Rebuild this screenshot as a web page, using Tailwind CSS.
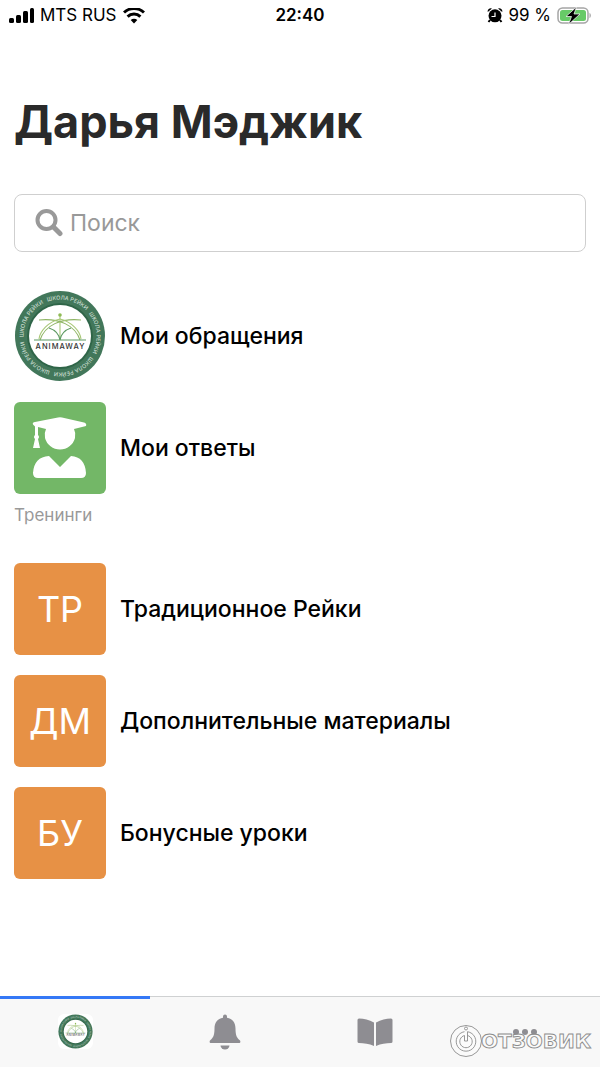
<!doctype html>

<html lang="ru">
  <head>
    <meta charset="UTF-8" />
    <meta name="viewport" content="width=device-width, initial-scale=1.0" />
    <title>Дарья Мэджик</title>
    <script src="https://cdn.jsdelivr.net/npm/@tailwindcss/browser@4"></script>
  </head>
  <body class="relative flex flex-col min-h-screen bg-white text-black font-['Inter','Liberation_Sans',sans-serif]">
    <!-- logo, used in the list and in the tab bar -->
    <svg class="hidden">
      <symbol id="logo" viewBox="0 0 92 92">
        <defs>
          <path id="ring" d="M46 9.500a36.500 36.500 0 1 1 0 73a36.500 36.500 0 1 1 0-73" />
        </defs>
        <circle cx="46" cy="46" r="45" fill="#42775a" />
        <circle cx="46" cy="46" r="33" fill="#2f6548" />
        <circle cx="46" cy="46" r="31" fill="#fff" />
        <g fill="#c9dccf" font-size="5.500">
          <text transform="rotate(-20 46 46)"><textPath href="#ring">ШКОЛА РЕЙКИ</textPath></text>
          <text transform="rotate(52 46 46)"><textPath href="#ring">ШКОЛА РЕЙКИ</textPath></text>
          <text transform="rotate(124 46 46)"><textPath href="#ring">ШКОЛА РЕЙКИ</textPath></text>
          <text transform="rotate(196 46 46)"><textPath href="#ring">ШКОЛА РЕЙКИ</textPath></text>
          <text transform="rotate(268 46 46)"><textPath href="#ring">ШКОЛА РЕЙКИ</textPath></text>
        </g>
        <g fill="none" stroke="#8fb565" stroke-width="1.100">
          <path d="M46 26v24" stroke="#a9c878" />
          <path d="M25 30c20-2 36 5 41 20M67 30c-20-2-36 5-41 20" />
          <path d="M25 49c1-8 9-17 21-20c12 3 20 12 21 20" stroke="#a9c878" />
          <path d="M20 50h52M46 50c-1-6-5-10-11-12M46 50c1-6 5-10 11-12" stroke="#5d9a63" />
        </g>
        <circle cx="46" cy="25" r="1.800" fill="#8fbb55" />
        <text x="46.500" y="59" text-anchor="middle" font-size="7.500" letter-spacing="1" fill="#333">ANIMAWAY</text>
      </symbol>
    </svg>

    <div class="grid grid-cols-3 items-center h-8 px-2 text-[17px]">
      <div class="flex items-center gap-[6px]">
        <svg class="w-[26px] h-4" viewBox="0 0 26 16">
          <rect x="1" y="10" width="5" height="5" rx="1.500" />
          <rect x="8" y="7" width="5" height="8" rx="1.500" />
          <rect x="15" y="3" width="5" height="12" rx="1.500" />
          <rect x="22" y="0" width="4" height="15" rx="1.500" />
        </svg>
        <span class="whitespace-nowrap">MTS RUS</span>
        <svg class="w-[22px] h-4" viewBox="0 0 22 16" fill="none" stroke="#000" stroke-width="3">
          <path d="M1 4.500C6.500-.7 15.500-.7 21 4.500M4.600 8.700c3.600-3.500 9.200-3.500 12.800 0" />
          <path d="M11 15.500l-3.300-3.400c1.900-1.700 4.700-1.700 6.600 0z" fill="#000" stroke="none" />
        </svg>
      </div>
      <div class="text-center font-semibold">22:40</div>
      <div class="flex items-center justify-end gap-[5px]">
        <svg class="w-4 h-4" viewBox="0 0 16 16">
          <path d="M3 12l-1.500 2M13 12l1.500 2" stroke="#000" stroke-width="2" />
          <circle cx="8" cy="7.800" r="6.500" />
          <path d="M.8 4A3 3 0 0 1 5 .5zM15.200 4A3 3 0 0 0 11 .5z" />
          <path d="M8 4.500v4H4.500" fill="none" stroke="#fff" stroke-width="1.200" />
        </svg>
        <span class="whitespace-nowrap">99 %</span>
        <svg class="w-9 h-[18px]" viewBox="0 0 36 18">
          <rect x="2" y="1" width="30" height="15" rx="4.500" fill="#fff" stroke="#a5a5a5" stroke-width="1.500" />
          <rect x="4" y="3" width="26" height="11" rx="2.500" fill="#67ca67" />
          <path d="M33.500 6v5c1.800-.6 1.800-4.400 0-5z" fill="#a5a5a5" />
          <path d="M20.500 0L10 9.500h5.500L12.500 17.500l11.500-10.500h-6z" stroke="#fff" stroke-width=".7" />
        </svg>
      </div>
    </div>

    <main class="flex-1 px-[14px]">
      <h1 class="mt-[62px] text-[45px] leading-[56px] font-bold text-[#2a2a2a]">Дарья Мэджик</h1>

      <label class="flex items-center gap-[7px] mt-11 h-[58px] px-5 border border-[#cfcfcf] rounded-lg">
        <svg class="w-7 h-7 shrink-0" viewBox="0 0 28 28" fill="none" stroke="#999">
          <circle cx="11.500" cy="11" r="9" stroke-width="4" />
          <path d="M18.500 18l6.500 6.500" stroke-width="5" stroke-linecap="round" />
        </svg>
        <input
          type="search"
          placeholder="Поиск"
          aria-label="Поиск"
          class="flex-1 min-w-0 text-[23px] outline-none placeholder:text-[#999]"
        />
      </label>

      <nav class="flex flex-col gap-5 mt-[38px] text-[23px] font-medium">
        <a href="#" class="flex items-center gap-[14px]">
          <svg class="w-[92px] h-[92px]"><use href="#logo" /></svg>
          Мои обращения
        </a>
        <a href="#" class="flex items-center gap-[14px]">
          <svg class="w-[92px] h-[92px] rounded-md bg-[#73b767]" viewBox="0 0 92 92" fill="#fff">
            <path d="M19 22.500Q18 20.500 21 20L44 15.500Q46 15 48 15.500L70 20.500Q73 21.500 72 24L60 27Q62 31 61 36A15.500 15.500 0 0 1 31 36Q30 31 32 27L24 25V33Q26 35 24 37L26 46H19L21 37Q19 35 21 33V24.500Z" />
            <path d="M35 54L46 65L57 54Q71 55 72 71Q72 76 67 76H24Q19 76 19 71Q20 55 35 54Z" />
          </svg>
          Мои ответы
        </a>
      </nav>

      <h2 class="mt-[9px] text-[17px] leading-6 text-[#999]">Тренинги</h2>

      <nav class="flex flex-col gap-5 mt-9 text-[23px] font-medium">
        <a href="#" class="flex items-center gap-[14px]">
          <span class="flex items-center justify-center w-[92px] h-[92px] rounded-md bg-[#e79145] text-white text-[36px] font-normal">ТР</span>
          Традиционное Рейки
        </a>
        <a href="#" class="flex items-center gap-[14px]">
          <span class="flex items-center justify-center w-[92px] h-[92px] rounded-md bg-[#e79145] text-white text-[36px] font-normal">ДМ</span>
          Дополнительные материалы
        </a>
        <a href="#" class="flex items-center gap-[14px]">
          <span class="flex items-center justify-center w-[92px] h-[92px] rounded-md bg-[#e79145] text-white text-[36px] font-normal">БУ</span>
          Бонусные уроки
        </a>
      </nav>
    </main>

    <nav class="grid grid-cols-4 h-[71px] border-t border-[#cfd1d2] bg-[#f8f8f8] text-[#8e8d92]">
      <a href="#" aria-label="Главная" class="flex items-center justify-center -mt-px pb-[3px] border-t-3 border-[#3478f6]">
        <svg class="w-[35px] h-[35px] rounded-md bg-white"><use href="#logo" /></svg>
      </a>
      <a href="#" aria-label="Уведомления" class="flex items-center justify-center">
        <svg class="w-8 h-9" viewBox="0 0 32 36" fill="currentColor">
          <path d="M16 .5a2 2 0 0 1 2 2v1.300c5.500 1 8.500 5 8.500 10.700 0 7 1.500 9.500 4 11.500 1.500 1.200 1 3-.5 3H2c-1.500 0-2-1.800-.5-3 2.500-2 4-4.500 4-11.500C5.500 8.800 8.500 4.800 14 3.800V2.500a2 2 0 0 1 2-2z" />
          <path d="M11.500 31.500h9a4.500 4 0 0 1-9 0z" />
        </svg>
      </a>
      <a href="#" aria-label="Материалы" class="flex items-center justify-center">
        <svg class="w-9 h-7" viewBox="0 0 36 28" fill="currentColor">
          <path d="M17 4.500C12 1.500 7 .7 2 .5Q.5.500.500 2V23.500Q.5 25 2 25C7 25.200 12 25.700 17 28z" />
          <path d="M19 4.500C24 1.500 29 .7 34 .5Q35.500.500 35.500 2V23.500Q35.500 25 34 25C29 25.200 24 25.700 19 28z" />
        </svg>
      </a>
      <a href="#" aria-label="Ещё" class="flex items-center justify-center">
        <svg class="w-6 h-[6px]" viewBox="0 0 24 6" fill="currentColor">
          <circle cx="3" cy="3" r="3" />
          <circle cx="12" cy="3" r="3" />
          <circle cx="21" cy="3" r="3" />
        </svg>
      </a>
    </nav>

    <!-- watermark over the tab bar -->
    <svg class="absolute right-2 bottom-2 w-[143px] h-9" viewBox="0 0 143 36" fill="#fff" fill-opacity=".35" stroke="#8c8c8c" stroke-width=".9">
      <circle cx="17" cy="18" r="15.500" />
      <path d="M15.500 8.700A9.800 9.800 0 1 0 18.500 8.700V18H15.500V12.500A6.200 6.200 0 1 0 18.500 12.500" />
      <circle cx="17" cy="5.500" r="1.500" />
      <text x="32" y="25" font-family="DejaVu Sans" font-size="20" font-weight="700">ОТЗОВИК</text>
    </svg>
  </body>
</html>
